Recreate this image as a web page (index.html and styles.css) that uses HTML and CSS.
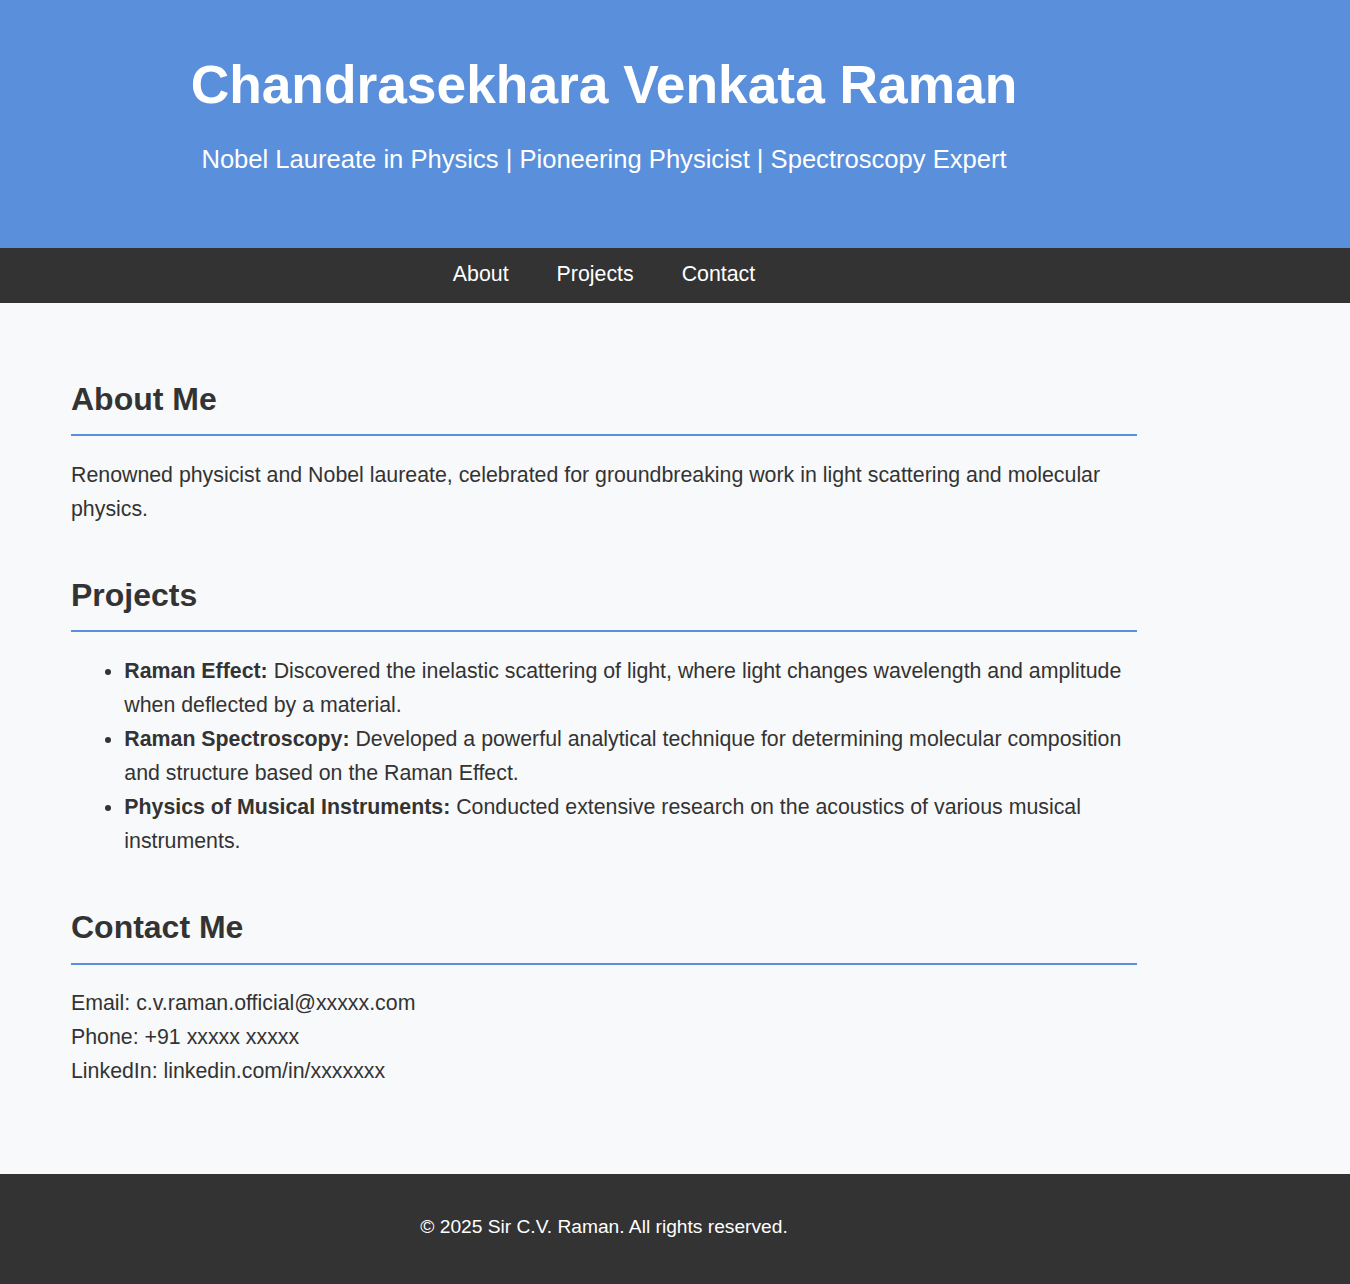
FILE: index.html
```html
<!DOCTYPE html>
<html lang="en">
<head>
<meta charset="utf-8">
<title>Chandrasekhara Venkata Raman</title>
<link rel="stylesheet" href="styles.css">
</head>
<body>
<header class="hero">
  <div class="container hero-inner">
    <h1 class="hero-title">Chandrasekhara Venkata Raman</h1>
    <p class="hero-sub">Nobel Laureate in Physics | Pioneering Physicist | Spectroscopy Expert</p>
  </div>
</header>
<nav class="nav">
  <div class="container nav-inner">
    <a class="nav-link" href="#about">About</a>
    <a class="nav-link" href="#projects">Projects</a>
    <a class="nav-link" href="#contact">Contact</a>
  </div>
</nav>
<main class="main">
  <div class="container">
    <section class="section" id="about">
      <h2 class="section-title">About Me</h2>
      <p class="text">Renowned physicist and Nobel laureate, celebrated for groundbreaking work in light scattering and molecular physics.</p>
    </section>
    <section class="section" id="projects">
      <h2 class="section-title">Projects</h2>
      <ul class="list">
        <li><strong>Raman Effect:</strong> Discovered the inelastic scattering of light, where light changes wavelength and amplitude when deflected by a material.</li>
        <li><strong>Raman Spectroscopy:</strong> Developed a powerful analytical technique for determining molecular composition and structure based on the Raman Effect.</li>
        <li><strong>Physics of Musical Instruments:</strong> Conducted extensive research on the acoustics of various musical instruments.</li>
      </ul>
    </section>
    <section class="section" id="contact">
      <h2 class="section-title">Contact Me</h2>
      <p class="text">Email: c.v.raman.official@xxxxx.com</p>
      <p class="text">Phone: +91 xxxxx xxxxx</p>
      <p class="text">LinkedIn: linkedin.com/in/xxxxxxx</p>
    </section>
  </div>
</main>
<footer class="footer">
  <div class="container footer-inner">
    <p class="footer-text">&copy; 2025 Sir C.V. Raman. All rights reserved.</p>
  </div>
</footer>
</body>
</html>
```

FILE: styles.css
```css
* { box-sizing: border-box; }

html, body {
  margin: 0;
  padding: 0;
}

body {
  font-family: "Liberation Sans", Arial, Helvetica, sans-serif;
  font-size: 21.33px;
  line-height: 1.6;
  color: #333333;
  background: #f8f9fa;
}

.container {
  width: 1066px;
  margin-left: 71px;
}

.hero {
  background: #598fdb;
  color: #ffffff;
  height: 248px;
  padding-top: 53px;
}

.hero-inner {
  text-align: center;
}

.hero-title {
  margin: 0;
  font-size: 2.5em;
  line-height: 1.2;
  font-weight: bold;
}

.hero-sub {
  margin: 22px 0 0;
  font-size: 1.2em;
  line-height: 1.6;
}

.nav {
  background: #333333;
  height: 55px;
  padding-top: 9px;
}

.nav-inner {
  display: flex;
  justify-content: center;
  gap: 48px;
}

.nav-link {
  color: #ffffff;
  text-decoration: none;
  font-size: 1em;
  line-height: 1.6;
}

.main {
  padding: 77px 0 86px;
}

.section {
  margin-bottom: 50px;
}

.section:last-child {
  margin-bottom: 0;
}

.section-title {
  margin: 0 0 21.3px;
  font-size: 1.5em;
  line-height: 1.2;
  font-weight: bold;
  color: #333333;
  padding-bottom: 16px;
  border-bottom: 2px solid #598fdb;
}

.text {
  margin: 0;
}

.list {
  margin: 0;
  padding-left: 2.5em;
}

.footer {
  background: #333333;
  color: #ffffff;
  height: 110px;
  padding-top: 38px;
}

.footer-inner {
  text-align: center;
}

.footer-text {
  margin: 0;
  font-size: 0.9em;
  line-height: 1.6;
}
```
